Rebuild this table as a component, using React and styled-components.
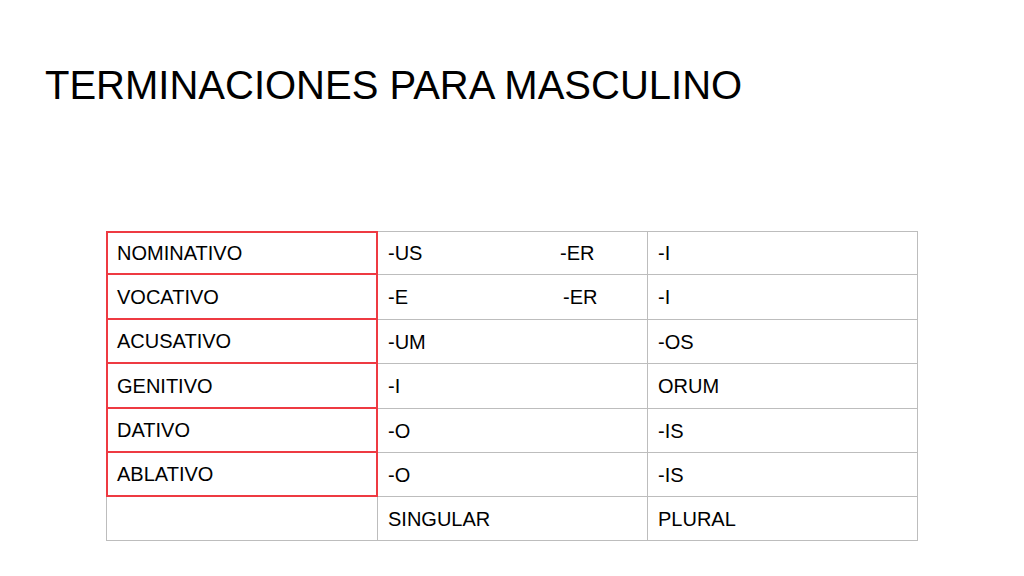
import React from 'react';
import styled, {createGlobalStyle} from "styled-components";

const GlobalStyle = createGlobalStyle`
  html, body {
    margin: 0;
    padding: 0;
    background: #ffffff;
  }
`

const Slide = styled.div`
  width: 1024px;
  height: 576px;
  box-sizing: border-box;
  padding: 62px 0 0 45px;
  background: #ffffff;
  font-family: "Liberation Sans", Arial, sans-serif;
  color: #000000;
  overflow: hidden;
`

const Title = styled.h1`
  margin: 0;
  height: 46px;
  font-size: 40px;
  font-weight: normal;
  line-height: 46px;
  letter-spacing: 0;
`

const Table = styled.table`
  margin: 123px 0 0 61px;
  width: 812px;
  border-collapse: separate;
  border-spacing: 0;
  table-layout: fixed;
`

const Row = styled.tr`
  height: ${({h}) => h}px;
`

const GRAY = '#bdbdbd'
const RED = '#ee3a42'

const line = (red) => red ? `2px solid ${RED}` : `1px solid ${GRAY}`

const Cell = styled.td`
  box-sizing: border-box;
  padding: 0 0 0 ${({red}) => red ? 9 : 10}px;
  border-right: ${({red}) => line(red)};
  border-bottom: ${({red}) => line(red)};
  border-top: ${({first, red}) => first ? line(red) : 'none'};
  border-left: ${({lead, red}) => lead ? line(red) : 'none'};
  font-size: 20px;
  line-height: 1;
  vertical-align: middle;
  white-space: nowrap;
`

const Lead = styled.span`
  display: inline-block;
  width: ${({w}) => w}px;
`

const rows = [
    {caso: 'NOMINATIVO', sg: '-US', alt: '-ER', gap: 172, pl: '-I', h: 44},
    {caso: 'VOCATIVO', sg: '-E', alt: '-ER', gap: 175, pl: '-I', h: 45},
    {caso: 'ACUSATIVO', sg: '-UM', pl: '-OS', h: 44},
    {caso: 'GENITIVO', sg: '-I', pl: 'ORUM', h: 45},
    {caso: 'DATIVO', sg: '-O', pl: '-IS', h: 44},
    {caso: 'ABLATIVO', sg: '-O', pl: '-IS', h: 44},
]

const App = () => {
    return (
        <>
            <GlobalStyle/>
            <Slide>
                <Title>TERMINACIONES PARA MASCULINO</Title>
                <Table>
                    <colgroup>
                        <col style={{width: '272px'}}/>
                        <col style={{width: '270px'}}/>
                        <col style={{width: '270px'}}/>
                    </colgroup>
                    <tbody>
                    {rows.map((row, i) => (
                        <Row key={row.caso} h={row.h}>
                            <Cell red lead first={i === 0}>{row.caso}</Cell>
                            <Cell first={i === 0}>
                                {row.alt ? (
                                    <>
                                        <Lead w={row.gap}>{row.sg}</Lead>
                                        {row.alt}
                                    </>
                                ) : row.sg}
                            </Cell>
                            <Cell first={i === 0}>{row.pl}</Cell>
                        </Row>
                    ))}
                    <Row h={44}>
                        <Cell lead/>
                        <Cell>SINGULAR</Cell>
                        <Cell>PLURAL</Cell>
                    </Row>
                    </tbody>
                </Table>
            </Slide>
        </>
    );
};

export default App;
